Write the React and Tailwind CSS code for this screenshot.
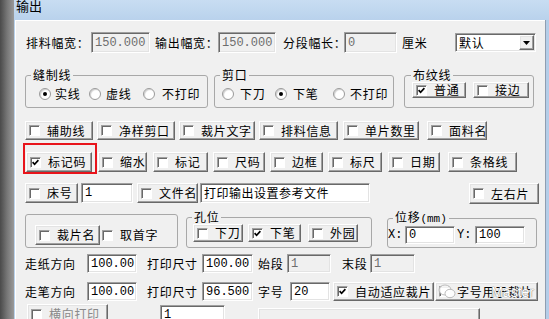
import React from "react";

const sunken =
  "border border-t-[#a0a0a0] border-l-[#a0a0a0] border-r-white border-b-white shadow-[inset_1px_1px_0_#696969,inset_-1px_-1px_0_#e3e3e3]";
const raised =
  "border border-t-white border-l-white border-r-[#696969] border-b-[#696969] shadow-[inset_-1px_-1px_0_#a0a0a0,inset_1px_1px_0_#e3e3e3]";

function Box({ checked }) {
  return (
    <span className="w-[11px] h-[11px] shrink-0 bg-white border border-t-[#a0a0a0] border-l-[#a0a0a0] border-r-white border-b-white shadow-[inset_1px_1px_0_#696969] flex items-center justify-center">
      {checked && (
        <svg width="7" height="7" viewBox="0 0 7 7">
          <path d="M0.6 3.2 L2.6 5.3 L6.4 1.2" stroke="#000" strokeWidth="1.7" fill="none" />
        </svg>
      )}
    </span>
  );
}

function CB({ w, h = "h-[19px]", checked, children, disabled, className = "" }) {
  return (
    <div className={`${w} ${h} ${className} shrink-0 flex items-center bg-[#f0f0f0] relative ${raised}`}>
      <span className="ml-[3px] flex">
        <Box checked={checked} />
      </span>
      <span
        className={`ml-[7px] text-[12px] tracking-[0.7px] leading-none whitespace-nowrap ${disabled ? "text-[#8a8a8a]" : "text-black"}`}
      >
        {children}
      </span>
    </div>
  );
}

function Field({ w, h = "h-full", value, disabled, cjk }) {
  return (
    <div
      className={`${w} ${h} shrink-0 flex items-center pl-[3px] overflow-hidden whitespace-nowrap leading-none ${sunken} ${
        disabled ? "bg-[#f0f0f0] text-[#6d6d6d]" : "bg-white text-black"
      } ${cjk ? "text-[12px] tracking-[0.5px]" : "font-['Liberation_Mono',monospace] text-[12px]"}`}
    >
      {value}
    </div>
  );
}

function L({ w, children, className = "" }) {
  return (
    <span className={`${w} ${className} shrink-0 whitespace-nowrap text-[12px] tracking-[0.7px] leading-none`}>
      {children}
    </span>
  );
}

function Radio({ w, checked, label, gap }) {
  return (
    <div className={`${w} shrink-0 flex items-center`}>
      <span className="w-[12px] h-[12px] shrink-0 rounded-full bg-white border border-[#9a9a9a] shadow-[inset_1px_1px_1px_#cfcfcf] flex items-center justify-center">
        {checked && <span className="w-[4px] h-[4px] rounded-full bg-black" />}
      </span>
      <span className={`${gap} text-[12px] tracking-[0.7px] leading-none whitespace-nowrap`}>{label}</span>
    </div>
  );
}

function Group({ w, h, label, legendMl = "ml-[5px]", children, className = "" }) {
  return (
    <fieldset className={`${w} ${h} ${className} shrink-0 border border-[#a8a8a8] rounded-[3px] min-w-0`}>
      {label && (
        <legend className={`${legendMl} px-[2px] text-[12px] tracking-[0.7px] leading-[14px]`}>{label}</legend>
      )}
      {children}
    </fieldset>
  );
}

export default function App() {
  return (
    <div className="w-[549px] h-[319px] overflow-hidden flex font-['Noto_Sans_CJK_SC',sans-serif] text-black select-none">
      <div className="w-[14px] shrink-0 bg-gradient-to-r from-[#4a4a4a] via-[#767676] to-[#9a9a9a]" />
      <div className="flex-1 flex flex-col min-w-0">
        <div className="h-[20px] shrink-0 bg-gradient-to-b from-[#c8ddf2] to-[#b9d2ec] pl-[2px] overflow-hidden">
          <div className="text-[13px] leading-none -mt-[1px]">输出</div>
        </div>
        <div className="flex-1 flex min-h-0">
          <div className="w-[1px] bg-[#b9d2ec]" />
          <div className="flex-1 bg-[#f0f0f0] border-l border-t border-white flex flex-col relative overflow-hidden">
            {/* Row 1 */}
            <div className="mt-[11px] h-[21px] flex items-center pl-[10px] shrink-0">
              <L w="w-[65px]">排料幅宽：</L>
              <Field w="w-[59px]" value="150.000" disabled />
              <L w="w-[63px]" className="ml-[5px]">输出幅宽：</L>
              <Field w="w-[58px]" value="150.000" disabled />
              <L w="w-[61px]" className="ml-[7px]">分段幅长：</L>
              <Field w="w-[53px]" value="0" disabled />
              <L w="w-[26px]" className="ml-[5px]">厘米</L>
              <div className={`ml-[27px] w-[81px] h-[19px] bg-white flex items-center ${sunken}`}>
                <span className="flex-1 pl-[3px] text-[12px] tracking-[0.7px] leading-none">默认</span>
                <div className={`w-[15px] h-[15px] mr-[1px] bg-[#f0f0f0] flex items-center justify-center ${raised}`}>
                  <svg width="7" height="4" viewBox="0 0 7 4">
                    <path d="M0 0 H7 L3.5 4 Z" fill="#000" />
                  </svg>
                </div>
              </div>
            </div>

            {/* Row 2 groups */}
            <div className="mt-[15px] flex pl-[9px] shrink-0">
              <Group w="w-[183px]" h="h-[40px]" label="缝制线">
                <div className="h-[24px] flex items-center pl-[13px]">
                  <Radio w="w-[50px]" checked label="实线" gap="ml-[4px]" />
                  <Radio w="w-[54px]" label="虚线" gap="ml-[5px]" />
                  <Radio w="w-[60px]" label="不打印" gap="ml-[7px]" />
                </div>
              </Group>
              <Group w="w-[180px]" h="h-[40px]" label="剪口" className="ml-[6px]">
                <div className="h-[24px] flex items-center pl-[7px]">
                  <Radio w="w-[53px]" label="下刀" gap="ml-[6px]" />
                  <Radio w="w-[58px]" checked label="下笔" gap="ml-[6px]" />
                  <Radio w="w-[60px]" label="不打印" gap="ml-[5px]" />
                </div>
              </Group>
              <Group w="w-[130px]" h="h-[40px]" label="布纹线" legendMl="ml-[6px]" className="ml-[10px]">
                <div className="flex pl-[7px]">
                  <CB w="w-[54px]" h="h-[16px]" checked>普通</CB>
                  <CB w="w-[56px]" h="h-[16px]" className="ml-[7px]">接边</CB>
                </div>
              </Group>
            </div>

            {/* Row 3 */}
            <div className="mt-[13px] h-[19px] flex pl-[9px] shrink-0">
              <CB w="w-[68px]" h="h-[19px]">辅助线</CB>
              <CB w="w-[78px]" h="h-[19px]" className="ml-[4px]">净样剪口</CB>
              <CB w="w-[76px]" h="h-[19px]" className="ml-[4px]">裁片文字</CB>
              <CB w="w-[79px]" h="h-[19px]" className="ml-[4px]">排料信息</CB>
              <CB w="w-[76px]" h="h-[19px]" className="ml-[5px]">单片数里</CB>
              <CB w="w-[60px]" h="h-[19px]" className="ml-[8px]">面料名</CB>
            </div>

            {/* Row 4 */}
            <div className="mt-[12px] h-[20px] flex pl-[10px] shrink-0 relative">
              <CB w="w-[66px]" h="h-[20px]" checked>标记码</CB>
              <CB w="w-[49px]" h="h-[20px]" className="ml-[6px]">缩水</CB>
              <CB w="w-[55px]" h="h-[20px]" className="ml-[6px]">标记</CB>
              <CB w="w-[52px]" h="h-[20px]" className="ml-[5px]">尺码</CB>
              <CB w="w-[53px]" h="h-[20px]" className="ml-[5px]">边框</CB>
              <CB w="w-[54px]" h="h-[20px]" className="ml-[5px]">标尺</CB>
              <CB w="w-[52px]" h="h-[20px]" className="ml-[6px]">日期</CB>
              <CB w="w-[69px]" h="h-[20px]" className="ml-[8px]">条格线</CB>
              <div className="absolute left-[7px] top-[-9px] w-[74px] h-[31px] border-2 border-[#e8141b] pointer-events-none" />
            </div>

            {/* Row 5 */}
            <div className="mt-[11px] h-[21px] flex items-start pl-[9px] shrink-0">
              <CB w="w-[53px]" h="h-[20px]">床号</CB>
              <div className="ml-[3px] h-[20px] flex">
                <Field w="w-[52px]" value="1" />
              </div>
              <CB w="w-[61px]" h="h-[20px]" className="ml-[4px]">文件名</CB>
              <div className="ml-[2px] h-[20px] flex">
                <Field w="w-[170px]" value="打印输出设置参考文件" cjk />
              </div>
              <CB w="w-[70px]" h="h-[21px]" className="ml-[99px]">左右片</CB>
            </div>

            {/* Row 6 */}
            <div className="mt-[6px] h-[38px] flex items-start pl-[9px] shrink-0">
              <div className="mt-[4px] w-[153px] h-[34px] shrink-0 border border-[#a8a8a8] rounded-[3px] flex items-start">
                <CB w="w-[65px]" h="h-[20px]" className="ml-[9px] mt-[10px]">裁片名</CB>
                <div className="ml-[2px] mt-[10px] h-[20px] flex items-center">
                  <Box />
                  <span className="ml-[7px] text-[12px] tracking-[0.7px] leading-none">取首字</span>
                </div>
              </div>
              <Group w="w-[186px]" h="h-[38px]" label="孔位" className="ml-[8px]">
                <div className="flex pl-[6px]">
                  <CB w="w-[50px]" h="h-[18px]">下刀</CB>
                  <CB w="w-[53px]" h="h-[18px]" checked className="ml-[5px]">下笔</CB>
                  <CB w="w-[50px]" h="h-[18px]" className="ml-[7px]">外园</CB>
                </div>
              </Group>
              <Group
                w="w-[150px]"
                h="h-[38px]"
                label={
                  <span>
                    位移<span className="font-['Liberation_Mono',monospace] text-[11px] tracking-normal">(mm)</span>
                  </span>
                }
                className="ml-[15px]"
              >
                <div className="flex items-center h-[18px]">
                  <span className="font-['Liberation_Mono',monospace] text-[12px] leading-none w-[17px] shrink-0">X:</span>
                  <Field w="w-[50px]" value="0" />
                  <span className="ml-[2px] font-['Liberation_Mono',monospace] text-[12px] leading-none w-[18px] shrink-0">Y:</span>
                  <Field w="w-[50px]" value="100" />
                </div>
              </Group>
            </div>

            {/* Row 7 */}
            <div className="mt-[6px] h-[19px] flex items-center pl-[9px] shrink-0">
              <L w="w-[62px]">走纸方向</L>
              <Field w="w-[50px]" value="100.00" />
              <L w="w-[55px]" className="ml-[10px]">打印尺寸</L>
              <Field w="w-[51px]" value="100.00" />
              <L w="w-[29px]" className="ml-[5px]">始段</L>
              <Field w="w-[44px]" value="1" disabled />
              <L w="w-[28px]" className="ml-[11px]">末段</L>
              <Field w="w-[45px]" value="1" disabled />
            </div>

            {/* Row 8 */}
            <div className="mt-[9px] h-[19px] flex items-center pl-[9px] shrink-0">
              <L w="w-[62px]">走笔方向</L>
              <Field w="w-[50px]" value="100.00" />
              <L w="w-[55px]" className="ml-[10px]">打印尺寸</L>
              <Field w="w-[51px]" value="96.500" />
              <L w="w-[32px]" className="ml-[5px]">字号</L>
              <Field w="w-[40px]" value="20" />
              <CB w="w-[101px]" h="h-[19px]" checked className="ml-[3px]">自动适应裁片</CB>
              <div className="ml-[1px] relative">
                <CB w="w-[103px]" h="h-[19px]">字号用于裁片</CB>
                <div className="absolute inset-0 flex items-center pointer-events-none">
                  <svg width="18" height="15" viewBox="0 0 18 15" className="ml-[3px] opacity-90">
                    <ellipse cx="7" cy="6" rx="6" ry="5" fill="#ffffff" stroke="#b5b5b5" strokeWidth="1" />
                    <ellipse cx="12" cy="9.5" rx="5" ry="4.2" fill="#ffffff" stroke="#b5b5b5" strokeWidth="1" />
                  </svg>
                  <span className="ml-auto mr-[4px] font-['Liberation_Sans',sans-serif] text-[14px] leading-none text-white [text-shadow:0_0_1px_#777,0_0_1px_#777]">
                    Master
                  </span>
                </div>
              </div>
            </div>

            {/* Row 9 (cut) */}
            <div className="mt-[3px] h-[24px] flex items-start pl-[11px] shrink-0">
              <CB w="w-[81px]" h="h-[20px]" disabled>横向打印</CB>
              <div className="ml-[52px] mt-[1px] h-[20px] flex">
                <Field w="w-[65px]" value="1" />
              </div>
              <div className={`ml-[33px] mt-[4px] w-[222px] h-[20px] bg-[#f0f0f0] ${raised}`} />
            </div>
          </div>
          <div className="w-[4px] bg-[#b4cde8] border-l border-[#8f9db0]" />
        </div>
      </div>
    </div>
  );
}
